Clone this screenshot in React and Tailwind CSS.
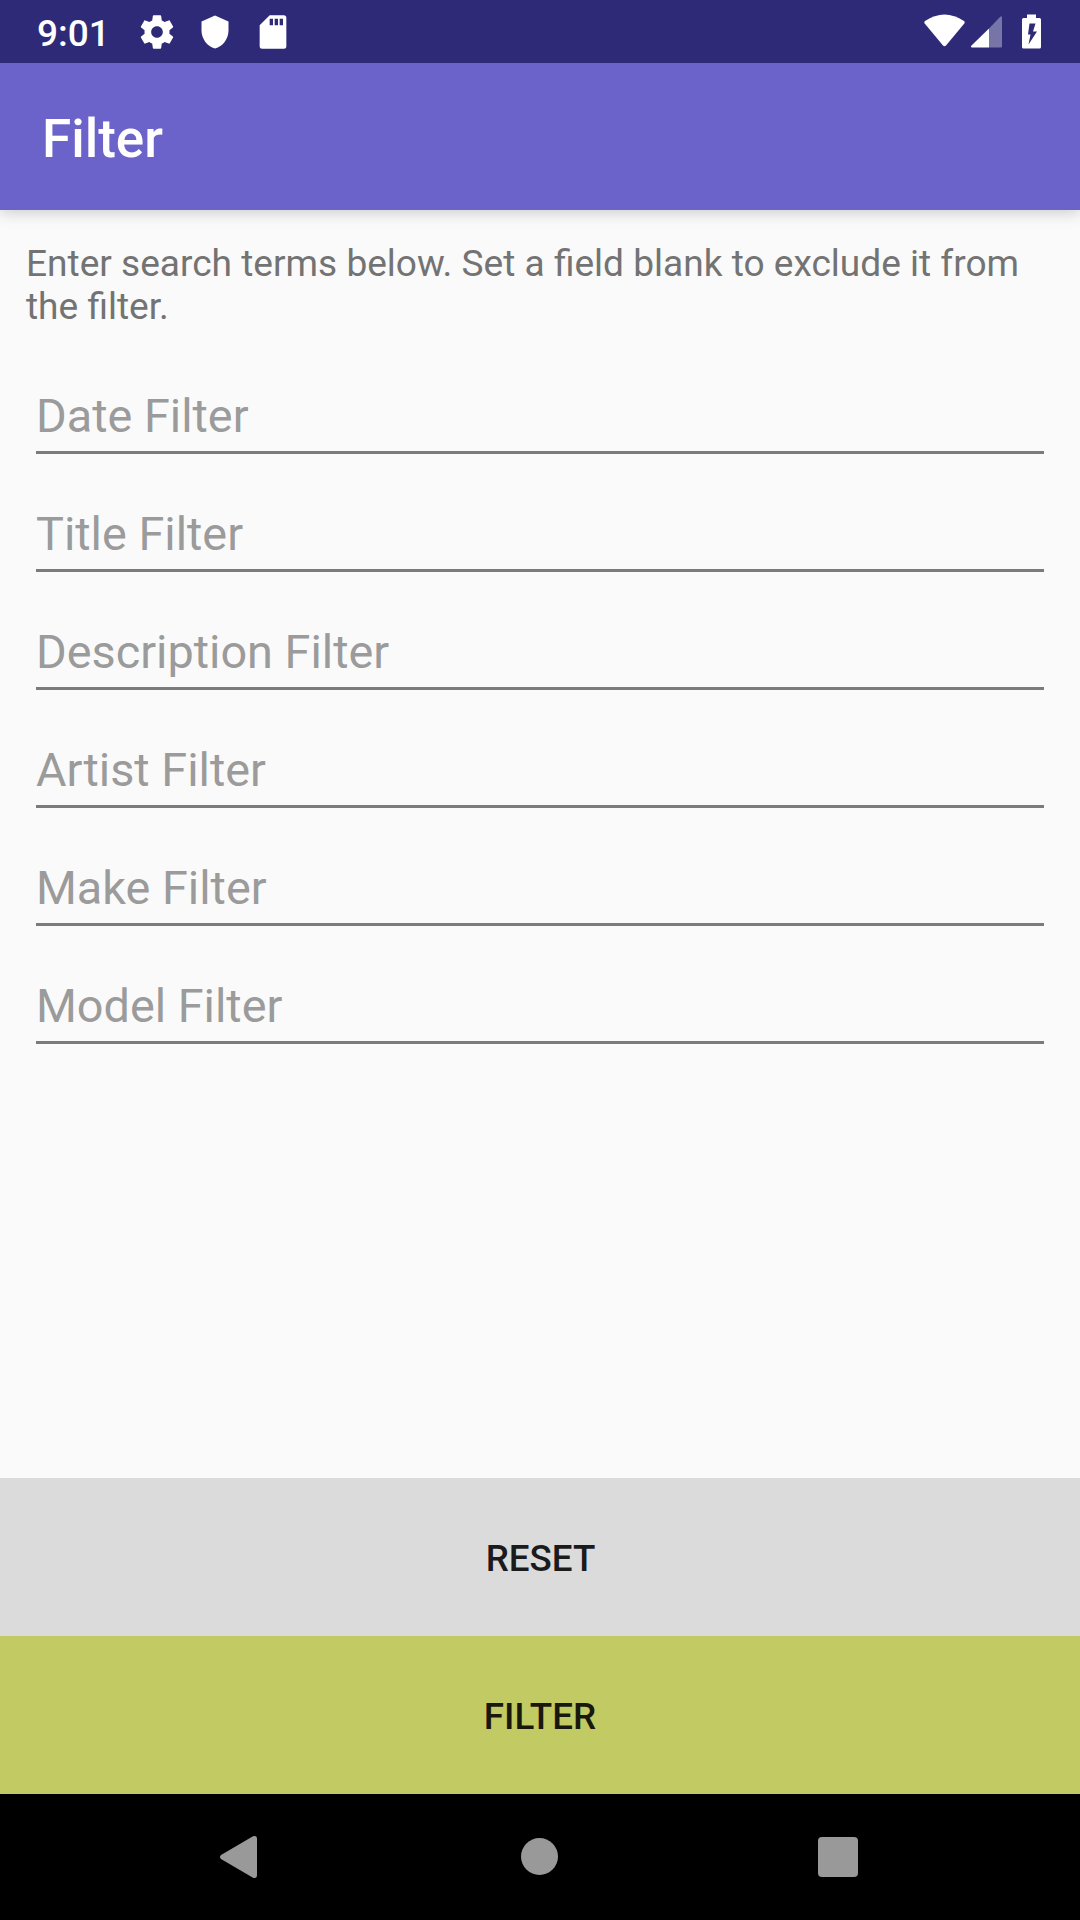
const fields = ["Date Filter", "Title Filter", "Description Filter", "Artist Filter", "Make Filter", "Model Filter"];

function StatusBar() {
  return (
    <div className="z-20 flex h-[63px] shrink-0 items-center bg-[#2e2a78] pl-[37px] text-white">
      <span className="w-[100px] pt-[3px] text-[37px] font-medium leading-none">9:01</span>
      <svg className="size-[40px]" viewBox="0 0 24 24" fill="currentColor">
        <path d="M19.43 12.98c.04-.32.07-.64.07-.98s-.03-.66-.07-.98l2.11-1.65c.19-.15.24-.42.12-.64l-2-3.46c-.12-.22-.39-.3-.61-.22l-2.49 1c-.52-.4-1.08-.73-1.69-.98l-.38-2.65C14.46 2.18 14.25 2 14 2h-4c-.25 0-.46.18-.49.42l-.38 2.65c-.61.25-1.17.59-1.69.98l-2.49-1c-.23-.09-.49 0-.61.22l-2 3.46c-.13.22-.07.49.12.64l2.11 1.65c-.04.32-.07.65-.07.98s.03.66.07.98l-2.11 1.65c-.19.15-.24.42-.12.64l2 3.46c.12.22.39.3.61.22l2.49-1c.52.4 1.08.73 1.69.98l.38 2.65c.03.24.24.42.49.42h4c.25 0 .46-.18.49-.42l.38-2.65c.61-.25 1.17-.59 1.69-.98l2.49 1c.23.09.49 0 .61-.22l2-3.46c.12-.22.07-.49-.12-.64l-2.11-1.65zM12 15.5c-1.93 0-3.5-1.57-3.5-3.5s1.57-3.5 3.5-3.5 3.5 1.57 3.5 3.5-1.57 3.5-3.5 3.5z" />
      </svg>
      <svg className="ml-[20px] size-[36px]" viewBox="0 0 24 24" fill="currentColor">
        <path d="M12 1L3 5v6c0 5.550 3.840 10.740 9 12 5.160-1.260 9-6.450 9-12V5z" />
      </svg>
      <svg className="ml-[20px] size-[40px]" viewBox="0 0 24 24" fill="currentColor">
        <path fillRule="evenodd" d="M18.500 2H10L4 8v12.500Q4 22 5.500 22h13Q20 22 20 20.500V3.500Q20 2 18.500 2zM12 8h-2V4h2zm3 0h-2V4h2zm3 0h-2V4h2z" />
      </svg>
      <svg className="ml-auto mr-[34px] h-[40px] w-[122px]" viewBox="924 11.500 122 40" fill="currentColor">
        <path d="M925 20.500Q944.500 7.500 964 20.500Q965.200 21.500 964.300 23L946 45Q944.500 46.500 943 45L924.700 23Q923.800 21.500 925 20.500Z" />
        <path d="M1002 17V46Q1002 47 1001 47H989V28L1000 16.500Q1002 15 1002 17Z" opacity=".35" />
        <path d="M989 28V47H972Q970 46.500 971.500 45Z" />
        <path fillRule="evenodd" d="M1027 14h9v3.500h3.500q1.500 0 1.500 1.500v27.500q0 1.500-1.500 1.500h-16q-1.500 0-1.500-1.500v-27.500q0-1.500 1.500-1.500h3.500ZM1029.500 23L1028 34H1030.500L1028.500 44L1037 31H1033L1035.500 23Z" />
      </svg>
    </div>
  );
}

export default function App() {
  return (
    <div className="flex h-[1920px] w-[1080px] flex-col bg-[#fafafa] font-[Roboto,sans-serif]">
      <StatusBar />
      <header className="z-10 flex h-[147px] shrink-0 items-center bg-[#6b63c9] pl-[42px] pt-[6px] text-[53px] font-medium text-white shadow-[0_3px_14px_rgba(0,0,0,0.18)]">Filter</header>
      <main className="flex-1">
        <p className="h-[123px] whitespace-nowrap pl-[26px] pt-[32px] text-[37.070px] leading-[43px] text-[#737373]">
          Enter search terms below. Set a field blank to exclude it from<br />the filter.
        </p>
        {fields.map((name) => (
          <div key={name} className="flex h-[118px] flex-col px-[36px] pt-[53px]">
            <input aria-label={name} placeholder={name} className="h-[68px] w-full border-b-[3px] border-[#7b7b7b] bg-transparent pb-[4px] text-[46.800px] outline-none placeholder:text-[#9b9b9b]" />
          </div>
        ))}
      </main>
      <button className="h-[158px] shrink-0 bg-[#dbdbdb] pl-px pt-[4px] text-[36.750px] font-medium text-[#1b1b1b]">RESET</button>
      <button className="h-[158px] shrink-0 bg-[#c2ca64] pt-[4px] text-[36.750px] font-medium text-[#18190c]">FILTER</button>
      <nav className="h-[126px] shrink-0 bg-black">
        <svg width="1080" height="126" viewBox="0 1794 1080 126" fill="#999">
          <path d="M221 1855 253 1836.300Q257 1835 257 1839V1875Q257 1879 253 1877.700L221 1859Q219 1857 221 1855Z" />
          <circle cx="539.500" cy="1856.500" r="18.500" />
          <rect x="818" y="1837" width="40" height="40" rx="4" />
        </svg>
      </nav>
    </div>
  );
}
